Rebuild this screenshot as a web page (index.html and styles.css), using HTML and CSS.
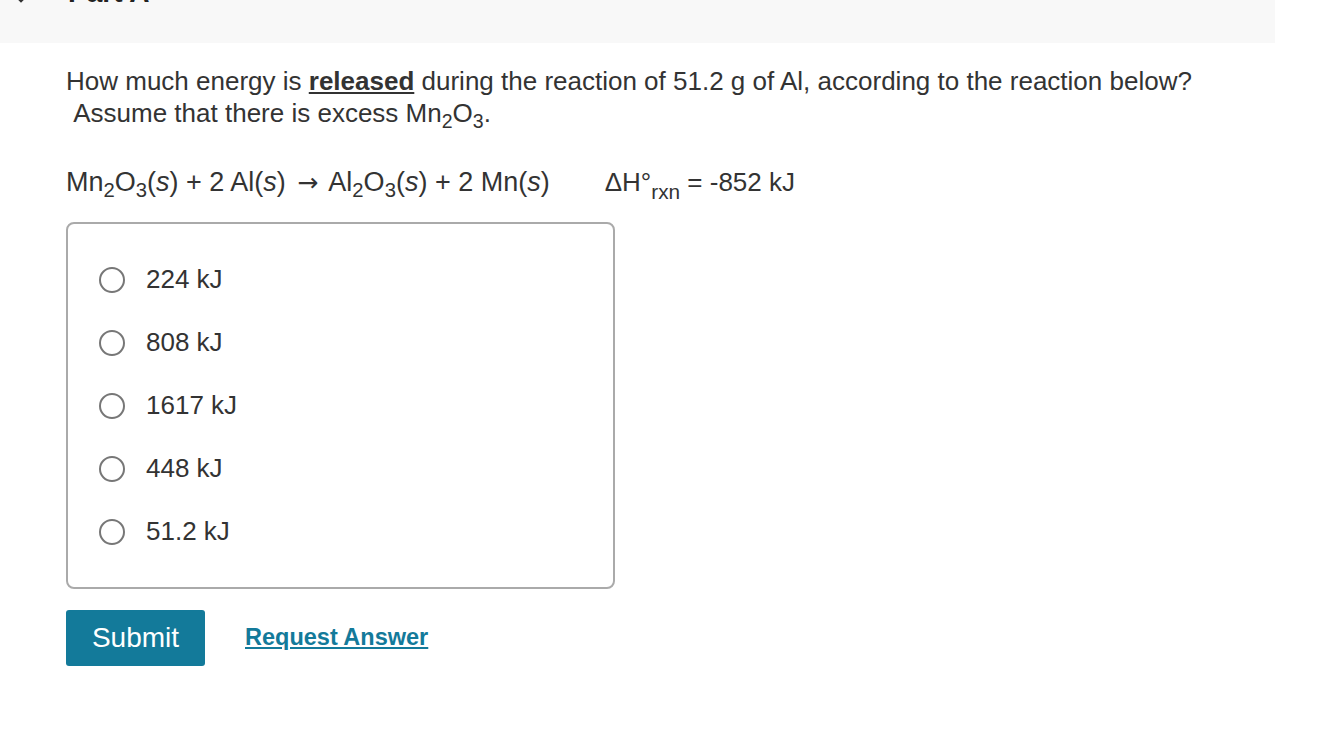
FILE: index.html
```html
<!DOCTYPE html>
<html lang="en">
<head>
<meta charset="utf-8">
<title>Part A</title>
<link rel="stylesheet" href="styles.css">
</head>
<body>
<div class="part-header">
  <div class="part-title">
    <svg class="chevron" width="14" height="10" viewBox="0 0 14 10"><path d="M2 2 L7 7 L12 2" fill="none" stroke="#333" stroke-width="2.5"/></svg>
    <span class="part-name">Part A</span>
  </div>
</div>
<div class="content">
  <p class="question">How much energy is <span class="strong">released</span> during the reaction of 51.2 g of Al, according to the reaction below?<br>&nbsp;Assume that there is excess Mn<sub>2</sub>O<sub>3</sub>.</p>
  <p class="equation">Mn<sub>2</sub>O<sub>3</sub>(<i>s</i>) + 2 Al(<i>s</i>) <span class="arrow">→</span> Al<sub>2</sub>O<sub>3</sub>(<i>s</i>) + 2 Mn(<i>s</i>)<span class="dh">ΔH°<sub>rxn</sub> = -852 kJ</span></p>
  <div class="choices">
    <label class="choice"><span class="radio"></span><span class="choice-text">224 kJ</span></label>
    <label class="choice"><span class="radio"></span><span class="choice-text">808 kJ</span></label>
    <label class="choice"><span class="radio"></span><span class="choice-text">1617 kJ</span></label>
    <label class="choice"><span class="radio"></span><span class="choice-text">448 kJ</span></label>
    <label class="choice"><span class="radio"></span><span class="choice-text">51.2 kJ</span></label>
  </div>
  <div class="actions">
    <button class="submit">Submit</button>
    <a class="request" href="#">Request Answer</a>
  </div>
</div>
</body>
</html>
```
FILE: styles.css
```css
html, body {
  margin: 0;
  padding: 0;
  background: #fff;
}
body {
  font-family: "Liberation Sans", Arial, sans-serif;
  color: #333;
}
.part-header {
  width: 1275px;
  height: 43px;
  background: #f8f8f8;
  overflow: hidden;
}
.part-title {
  display: flex;
  align-items: center;
  margin-top: -22px;
  padding-left: 14px;
  height: 30px;
}
.chevron {
  margin-top: 12px;
}
.part-name {
  margin-left: 40px;
  font-weight: bold;
  font-size: 28px;
  color: #222;
}
.content {
  padding-left: 66px;
}
.question {
  margin: 22px 0 0;
  font-size: 26px;
  line-height: 32px;
}
.strong {
  font-weight: bold;
  text-decoration: underline;
}
sub {
  font-size: 75%;
  line-height: 0;
  vertical-align: -0.3em;
}
.equation {
  margin: 37px 0 0;
  font-size: 27px;
  line-height: 32px;
}
.arrow {
  margin: 0 4px 0 4px;
  font-family: "DejaVu Sans", sans-serif;
  font-size: 25px;
  line-height: 0;
}
.dh {
  margin-left: 55px;
  font-size: 26px;
}
.dh sub {
  font-size: 80%;
  vertical-align: -0.4em;
}
.choices {
  margin-top: 24px;
  width: 514px;
  border: 2px solid #aaa;
  border-radius: 8px;
  padding: 24px 0 24px 31px;
  display: flex;
  flex-direction: column;
}
.choice {
  display: flex;
  align-items: center;
  height: 63px;
  font-size: 26px;
}
.radio {
  width: 22px;
  height: 22px;
  border: 2px solid #777;
  border-radius: 50%;
  box-sizing: content-box;
  flex: none;
}
.choice-text {
  margin-left: 21px;
}
.actions {
  margin-top: 21px;
  display: flex;
  align-items: center;
}
.submit {
  width: 139px;
  height: 56px;
  border: none;
  border-radius: 3px;
  background: #137a9a;
  color: #fff;
  font-family: "Liberation Sans", Arial, sans-serif;
  font-size: 28px;
  padding: 0;
}
.request {
  margin-left: 40px;
  margin-top: -2px;
  font-weight: bold;
  font-size: 23.5px;
  color: #137a9a;
  text-decoration: underline;
}
```
